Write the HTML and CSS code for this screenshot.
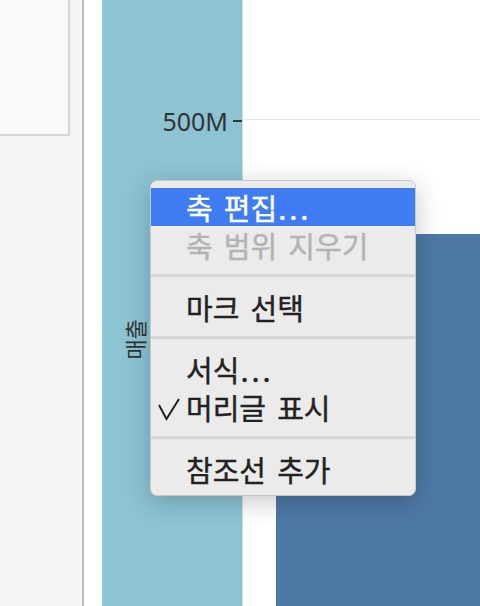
FILE: index.html
```html
<!DOCTYPE html>
<html lang="ko">
	<head>
		<meta charset="UTF-8">
		<title>매출</title>
		<link rel="stylesheet" href="styles.css">
	</head>
	<body>
		<div class="screen">
			<!--왼쪽 패널-->
			<aside class="sidebar">
				<div class="card"></div>
			</aside>
			<!--차트-->
			<main class="chart">
				<div class="axis">
					<div class="tick">
						<span class="tick-label">500M</span>
						<span class="tick-mark"></span>
					</div>
					<div class="axis-title">매출</div>
				</div>
				<div class="plot">
					<div class="gridline"></div>
					<div class="bar"></div>
				</div>
			</main>
			<!--컨텍스트 메뉴-->
			<ul class="menu">
				<li class="menu-item active"><span class="check"></span>축 편집<span class="dots">...</span></li>
				<li class="menu-item disabled"><span class="check"></span>축 범위 지우기</li>
				<li class="sep"></li>
				<li class="menu-item"><span class="check"></span>마크 선택</li>
				<li class="sep"></li>
				<li class="menu-item"><span class="check"></span>서식<span class="dots">...</span></li>
				<li class="menu-item">
					<span class="check">
						<svg width="22" height="24" viewBox="0 0 22 24"><polyline points="1,8 8.5,22 21,2" fill="none" stroke="#222" stroke-width="2"/></svg>
					</span>머리글 표시
				</li>
				<li class="sep"></li>
				<li class="menu-item"><span class="check"></span>참조선 추가</li>
			</ul>
		</div>
	</body>
</html>
```

FILE: styles.css
```css
* {
	margin: 0;
	padding: 0;
	box-sizing: border-box;
}

ul {
	list-style: none
}

body {
	font-family: "Noto Sans", "Noto Sans CJK KR", sans-serif;
	color: #333;
}

.screen {
	display: flex;
	width: 480px;
	height: 606px;
	position: relative;
	overflow: hidden;
	background-color: #fff;
}

.sidebar {
	width: 84px;
	flex: none;
	background-color: #f4f4f4;
	border-right: 2px solid #bababa;
}

.card {
	width: 70px;
	height: 136px;
	background-color: #f9f9f9;
	border-right: 2px solid #d6d6d6;
	border-bottom: 2px solid #d6d6d6;
}

.chart {
	flex: 1;
	display: flex;
	padding-left: 18px;
}

.axis {
	width: 141px;
	flex: none;
	display: flex;
	flex-direction: column;
	padding-top: 108px;
	background-color: #8cc4d3;
	border-right: 1px solid #d9d9d9;
}

.tick {
	display: flex;
	align-items: center;
	justify-content: flex-end;
	gap: 5px;
	height: 26px;
}

.tick-label {
	font-size: 25px;
	line-height: 26px;
	color: #333;
}

.tick-mark {
	width: 9px;
	height: 2px;
	background-color: #333;
}

.axis-title {
	align-self: flex-start;
	margin-top: 185px;
	margin-left: 20px;
	font-family: "Noto Sans CJK KR", sans-serif;
	font-size: 22px;
	line-height: 24px;
	color: #333;
	writing-mode: vertical-rl;
	text-orientation: sideways;
	transform: rotate(180deg);
}

.plot {
	flex: 1;
	display: flex;
	flex-direction: column;
	padding-top: 119px;
}

.gridline {
	height: 1px;
	background-color: #e6e6e6;
}

.bar {
	flex: 1;
	margin-top: 114px;
	margin-left: 33px;
	background-color: #4e79a5;
}

.menu {
	position: absolute;
	left: 150px;
	top: 180px;
	width: 266px;
	padding: 7px 0;
	background-color: #ebebeb;
	border: 1px solid #c8c8c8;
	border-radius: 7px;
	box-shadow: 0 6px 26px rgba(0, 0, 0, 0.22);
	font-family: "Noto Sans CJK KR", sans-serif;
}

.menu-item {
	display: flex;
	align-items: center;
	height: 38px;
	padding-left: 7px;
	font-size: 29px;
	word-spacing: 3px;
	color: #222;
	-webkit-text-stroke: 0.4px currentColor;
	white-space: nowrap;
}

.menu-item.active {
	background-color: #407cf1;
	color: #fff;
}

.menu-item.disabled {
	color: #b3b3b3;
}

.check {
	width: 28px;
	flex: none;
	display: flex;
	align-items: center;
}

.check svg {
	margin-top: 3px;
}

.dots {
	letter-spacing: 3px;
	margin-left: 1px;
}

.sep {
	height: 3px;
	margin: 10px 0 11px;
	background-color: #d6d6d6;
}
```
